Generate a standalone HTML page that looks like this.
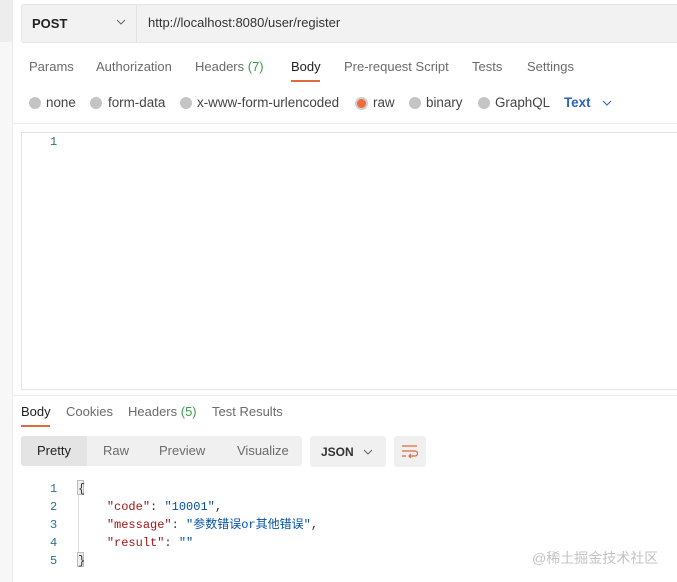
<!DOCTYPE html>
<html><head><meta charset="utf-8"><style>
*{margin:0;padding:0;box-sizing:border-box}
body{width:677px;height:582px;background:#fff;font-family:"Liberation Sans","Noto Sans CJK SC",sans-serif;font-size:13px;color:#212121;position:relative;overflow:hidden}
.a{position:absolute}
.side{left:0;top:0;width:13px;height:582px;background:#f7f7f7;border-right:1px solid #ececec}
.side2{left:0;top:0;width:13px;height:42px;background:#ededed}
.t{color:#6b6b6b}
.dot{position:absolute;top:97px;width:12px;height:12px;border-radius:50%;background:#c4c4c4}
.rl{position:absolute;top:95px;color:#444;font-size:13.4px;white-space:nowrap}
.mono{font-family:"Liberation Mono","Noto Sans CJK SC",monospace;font-size:12px}
.ln{color:#2a7388}
</style></head><body>
<div class="a side"></div><div class="a side2"></div>
<div class="a" style="left:21px;top:4px;width:660px;height:39px;background:#f2f2f2;border:1px solid #e6e6e6;border-radius:3px"></div>
<div class="a" style="left:136px;top:5px;width:1px;height:37px;background:#e3e3e3"></div>
<div class="a" style="left:32px;top:16px;font-weight:bold;font-size:13px">POST</div>
<svg class="a" style="left:116px;top:19px" width="10" height="6"><path d="M1 1L5 5L9 1" stroke="#666" fill="none"/></svg>
<div class="a" style="left:148px;top:15px;font-size:13px;color:#333">http://localhost:8080/user/register</div>

<div class="a t" style="left:29px;top:59px">Params</div>
<div class="a t" style="left:96px;top:59px">Authorization</div>
<div class="a t" style="left:195px;top:59px">Headers <span style="color:#3c9b4e">(7)</span></div>
<div class="a" style="left:291px;top:59px">Body</div>
<div class="a" style="left:291px;top:80px;width:29px;height:2px;background:#e06a3c"></div>
<div class="a t" style="left:344px;top:59px">Pre-request Script</div>
<div class="a t" style="left:472px;top:59px">Tests</div>
<div class="a t" style="left:527px;top:59px">Settings</div>

<div class="dot" style="left:29px"></div><div class="rl" style="left:46px">none</div>
<div class="dot" style="left:90px"></div><div class="rl" style="left:108px">form-data</div>
<div class="dot" style="left:180px"></div><div class="rl" style="left:197px">x-www-form-urlencoded</div>
<div class="dot" style="left:355px;width:13px;height:13px;background:#f26b3a;border:2px solid #cfcfcf"></div><div class="rl" style="left:373px">raw</div>
<div class="dot" style="left:409px"></div><div class="rl" style="left:426px">binary</div>
<div class="dot" style="left:478px"></div><div class="rl" style="left:495px">GraphQL</div>
<div class="rl" style="left:564px;color:#2e64b4;font-weight:bold">Text</div>
<svg class="a" style="left:602px;top:100px" width="10" height="6"><path d="M1 1L5 5L9 1" stroke="#2e64b4" fill="none"/></svg>

<div class="a" style="left:13px;top:123px;width:664px;height:1px;background:#ececec"></div>
<div class="a" style="left:21px;top:132px;width:660px;height:258px;border:1px solid #e3e3e3"></div>
<div class="a mono ln" style="left:50px;top:135px">1</div>
<div class="a" style="left:13px;top:395px;width:664px;height:1px;background:#ececec"></div>

<div class="a" style="left:21px;top:404px">Body</div>
<div class="a" style="left:21px;top:425px;width:29px;height:2px;background:#e06a3c"></div>
<div class="a t" style="left:66px;top:404px">Cookies</div>
<div class="a t" style="left:128px;top:404px">Headers <span style="color:#3c9b4e">(5)</span></div>
<div class="a t" style="left:212px;top:404px">Test Results</div>

<div class="a" style="left:21px;top:436px;width:281px;height:30px;background:#f0f0f0;border-radius:3px"></div>
<div class="a" style="left:21px;top:436px;width:66px;height:30px;background:#e4e4e4;border-radius:3px 0 0 3px"></div>
<div class="a" style="left:37px;top:443px">Pretty</div>
<div class="a t" style="left:103px;top:443px">Raw</div>
<div class="a t" style="left:159px;top:443px">Preview</div>
<div class="a t" style="left:237px;top:443px">Visualize</div>
<div class="a" style="left:310px;top:436px;width:76px;height:31px;background:#f0f0f0;border-radius:3px"></div>
<div class="a" style="left:321px;top:445px;font-weight:bold;font-size:12px;color:#333">JSON</div>
<svg class="a" style="left:363px;top:449px" width="10" height="6"><path d="M1 1L5 5L9 1" stroke="#666" fill="none"/></svg>
<div class="a" style="left:394px;top:436px;width:32px;height:31px;background:#f0f0f0;border-radius:3px"></div>
<svg class="a" style="left:402px;top:445px" width="16" height="14"><path d="M0 1H15M0 6H13a2.5 2.5 0 0 1 0 5H7M9 9L7 11L9 13M0 11H4" stroke="#e06a3c" fill="none" stroke-width="1.2"/></svg>

<div class="a mono ln" style="left:50px;top:480px;line-height:18px">1<br>2<br>3<br>4<br>5</div>
<div class="a" style="left:77px;top:480px;width:7px;height:15px;border:1px solid #bbb;background:#eee"></div>
<div class="a" style="left:77px;top:552px;width:7px;height:15px;border:1px solid #bbb;background:#eee"></div>
<div class="a" style="left:78px;top:495px;width:1px;height:57px;background:#ddd"></div>
<div class="a mono" style="left:78px;top:480px;line-height:18px;white-space:pre;color:#333">{
    <span style="color:#a31515">"code"</span>: <span style="color:#0451a5">"10001"</span>,
    <span style="color:#a31515">"message"</span>: <span style="color:#0451a5">"参数错误or其他错误"</span>,
    <span style="color:#a31515">"result"</span>: <span style="color:#0451a5">""</span>
}</div>
<div class="a" style="left:532px;top:548px;font-size:14px;color:#c4c4c4">@稀土掘金技术社区</div>
</body></html>
